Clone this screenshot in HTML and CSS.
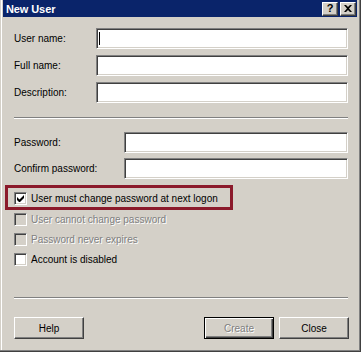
FILE: index.html
```html
<!DOCTYPE html>
<html>
<head>
<meta charset="utf-8">
<link rel="stylesheet" href="styles.css">
</head>
<body>
<div class="window">
  <div class="titlebar">
    <span class="title">New User</span>
    <div class="tbtns">
      <span class="tbtn help">?</span>
      <span class="tbtn close">
        <svg width="8" height="7" viewBox="0 0 8 7"><path d="M0 0h2l2 2 2-2h2L5 3.5 8 7H6L4 5 2 7H0l3-3.5z" fill="#000"/></svg>
      </span>
    </div>
  </div>
  <div class="content">
    <div class="fields names">
      <span class="lbl">User name:</span>
      <div class="edit"><span class="caret"></span></div>
      <span class="lbl">Full name:</span>
      <div class="edit"></div>
      <span class="lbl">Description:</span>
      <div class="edit"></div>
    </div>
    <div class="sep first"></div>
    <div class="fields pw">
      <span class="lbl">Password:</span>
      <div class="edit"></div>
      <span class="lbl">Confirm password:</span>
      <div class="edit"></div>
    </div>
    <div class="checks">
      <div class="check boxed">
        <span class="cb">
          <svg width="7" height="7" viewBox="0 0 7 7"><path d="M0 2v3l2 2h1l4-4V0L2.5 4.5z" fill="#000"/></svg>
        </span>
        <span class="ctext">User must change password at next logon</span>
      </div>
      <div class="check disabled">
        <span class="cb"></span>
        <span class="ctext">User cannot change password</span>
      </div>
      <div class="check disabled">
        <span class="cb"></span>
        <span class="ctext">Password never expires</span>
      </div>
      <div class="check">
        <span class="cb"></span>
        <span class="ctext">Account is disabled</span>
      </div>
    </div>
    <div class="sep second"></div>
    <div class="buttons">
      <span class="btn">Help</span>
      <span class="spacer"></span>
      <span class="btn default disabled">Create</span>
      <span class="btn">Close</span>
    </div>
  </div>
</div>
</body>
</html>
```

FILE: styles.css
```css
html, body {
  margin: 0;
  padding: 0;
  background: #d4d0c8;
}

.window {
  width: 361px;
  height: 352px;
  box-sizing: border-box;
  padding: 0 4px 4px 3px;
  background: #d4d0c8;
  box-shadow: inset -1px -1px #404040, inset -2px -2px #808080, inset 1px 0 #d4d0c8, inset 2px 0 #fff;
  font-family: "Liberation Sans", Arial, sans-serif;
  font-size: 10px;
  color: #000;
}

.titlebar {
  height: 17px;
  background: #0a246a;
  display: flex;
  align-items: center;
  justify-content: space-between;
  padding: 0 1px 0 3px;
}

.title {
  color: #fff;
  font-weight: bold;
  font-size: 11px;
  letter-spacing: -0.1px;
}

.tbtns {
  display: flex;
  gap: 2px;
}

.tbtn {
  width: 16px;
  height: 14px;
  box-sizing: border-box;
  background: #d4d0c8;
  border: 1px solid;
  border-color: #fff #404040 #404040 #fff;
  box-shadow: inset -1px -1px #808080;
  display: flex;
  align-items: center;
  justify-content: center;
  font-weight: bold;
  font-size: 11px;
  line-height: 1;
}

.content {
  display: flex;
  flex-direction: column;
}

.fields {
  display: grid;
  align-items: center;
  padding: 0 9px 0 11px;
}

.fields.names {
  margin-top: 11px;
  grid-template-columns: 82px 1fr;
  row-gap: 6px;
}

.fields.pw {
  margin-top: 13px;
  grid-template-columns: 110px 1fr;
  row-gap: 5px;
}

.lbl {
  white-space: nowrap;
}

.edit {
  height: 21px;
  box-sizing: border-box;
  background: #fff;
  border: 1px solid;
  border-color: #808080 #fff #fff #808080;
  box-shadow: inset 1px 1px #404040, inset -1px -1px #d4d0c8;
  display: flex;
  align-items: center;
  padding-left: 2px;
}

.caret {
  width: 1px;
  height: 13px;
  background: #000;
}

.sep {
  height: 2px;
  box-sizing: border-box;
  border-top: 1px solid #808080;
  border-bottom: 1px solid #fff;
  margin: 0 9px 0 11px;
}

.sep.first {
  margin-top: 14px;
}

.sep.second {
  margin-top: 27px;
}

.checks {
  margin-top: 6px;
  padding-left: 2px;
  display: flex;
  flex-direction: column;
}

.check {
  height: 20px;
  box-sizing: border-box;
  padding: 3px 0 0 9px;
  display: flex;
  align-items: flex-start;
  gap: 4px;
}

.check.boxed {
  width: 228px;
  height: 25px;
  border: 3px solid #8b1a2b;
  padding: 4px 0 0 6px;
}

.cb {
  width: 13px;
  height: 13px;
  flex: none;
  box-sizing: border-box;
  background: #fff;
  border: 1px solid;
  border-color: #808080 #fff #fff #808080;
  box-shadow: inset 1px 1px #404040, inset -1px -1px #d4d0c8;
  display: flex;
  align-items: center;
  justify-content: center;
}

.ctext {
  line-height: 13px;
  white-space: nowrap;
}

.check.disabled .cb {
  background: #d4d0c8;
}

.check.disabled .ctext {
  color: #808080;
  text-shadow: 1px 1px #fff;
}

.buttons {
  margin-top: 18px;
  padding: 0 8px 0 11px;
  display: flex;
  gap: 5px;
}

.spacer {
  flex: 1;
}

.btn {
  width: 70px;
  height: 22px;
  box-sizing: border-box;
  border: 1px solid;
  border-color: #fff #404040 #404040 #fff;
  box-shadow: inset -1px -1px #808080;
  display: flex;
  align-items: center;
  justify-content: center;
}

.btn.default {
  border-color: #000;
  box-shadow: inset 1px 1px #fff, inset -1px -1px #404040, inset -2px -2px #808080;
}

.btn.disabled {
  color: #808080;
  text-shadow: 1px 1px #fff;
}
```
